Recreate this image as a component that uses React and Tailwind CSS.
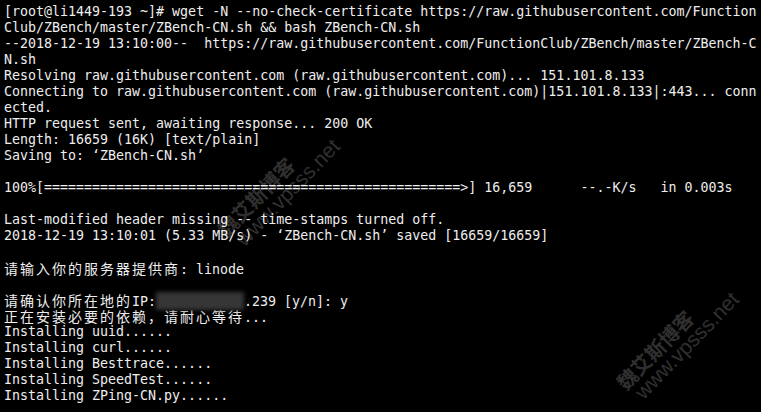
import React from "react";

const C = ({ children }) => (
  <span className="font-['Noto_Sans_CJK_SC',sans-serif] text-[14px] tracking-[2px] leading-[16px]">
    {children}
  </span>
);

const Blur = () => (
  <span className="inline-block align-middle w-[88px] h-[18px] -mt-[2px] bg-[#363636] blur-[2px]" />
);

const lines = [
  ["[root@li1449-193 ~]# wget -N --no-check-certificate https://raw.githubusercontent.com/Function"],
  ["Club/ZBench/master/ZBench-CN.sh && bash ZBench-CN.sh"],
  ["--2018-12-19 13:10:00--  https://raw.githubusercontent.com/FunctionClub/ZBench/master/ZBench-C"],
  ["N.sh"],
  ["Resolving raw.githubusercontent.com (raw.githubusercontent.com)... 151.101.8.133"],
  ["Connecting to raw.githubusercontent.com (raw.githubusercontent.com)|151.101.8.133|:443... conn"],
  ["ected."],
  ["HTTP request sent, awaiting response... 200 OK"],
  ["Length: 16659 (16K) [text/plain]"],
  ["Saving to: \u2018ZBench-CN.sh\u2019"],
  [""],
  ["100%[" + "=".repeat(52) + ">] 16,659      --.-K/s   in 0.003s"],
  [""],
  ["Last-modified header missing -- time-stamps turned off."],
  ["2018-12-19 13:10:01 (5.33 MB/s) - \u2018ZBench-CN.sh\u2019 saved [16659/16659]"],
  [""],
  [<C key="c">请输入你的服务器提供商</C>, ": linode"],
  [""],
  [<C key="c">请确认你所在地的</C>, "IP:", <Blur key="b" />, ".239 [y/n]: y"],
  [<C key="c">正在安装必要的依赖，请耐心等待</C>, "..."],
  ["Installing uuid......"],
  ["Installing curl......"],
  ["Installing Besttrace......"],
  ["Installing SpeedTest......"],
  ["Installing ZPing-CN.py......"],
];

const Watermark = ({ pos }) => (
  <div
    className={`pointer-events-none absolute ${pos} origin-top-left -rotate-[46deg] text-white/20 whitespace-nowrap`}
  >
    <div className="font-['Noto_Sans_CJK_SC',sans-serif] text-[20px] leading-[20px] font-bold">
      魏艾斯博客
    </div>
    <div className="font-['Liberation_Sans',sans-serif] text-[21px] leading-[20px] pl-[6px]">
      www.vpsss.net
    </div>
  </div>
);

export default function App() {
  return (
    <div className="relative w-[761px] h-[412px] overflow-hidden bg-black pt-[4px] pl-[4px] text-[#eeeeee] font-['DejaVu_Sans_Mono','Noto_Sans_CJK_SC',monospace] text-[13.3px]">
      {lines.map((segs, i) => (
        <div key={i} className="h-[16px] leading-[16px] whitespace-pre">
          {segs}
        </div>
      ))}
      <Watermark pos="left-[214px] top-[226px]" />
      <Watermark pos="left-[613px] top-[379px]" />
    </div>
  );
}
